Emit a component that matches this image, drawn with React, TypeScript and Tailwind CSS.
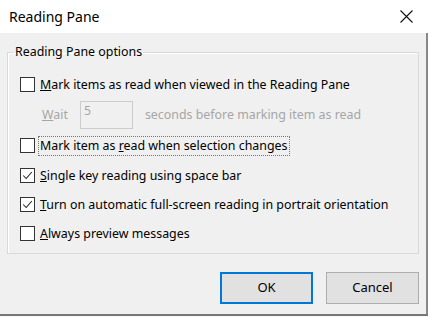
import React from 'react';

const Check = () => (
  <svg viewBox="0 0 15 15" className="absolute inset-0 h-full w-full">
    <path d="M2.5 7.5 L6 11 L12.5 3.5" fill="none" stroke="#222" strokeWidth="1.2" />
  </svg>
);

const Box = ({ checked }: { checked?: boolean }) => (
  <span className="relative block h-[15px] w-[15px] shrink-0 border border-[#333] bg-white">
    {checked && <Check />}
  </span>
);

const Row = ({
  checked,
  focus,
  children,
}: {
  checked?: boolean;
  focus?: boolean;
  children: React.ReactNode;
}) => (
  <div className="flex h-[29px] items-center pl-[12px]">
    <Box checked={checked} />
    <span
      className={
        focus
          ? 'ml-[3px] border border-dotted border-[#777] px-[1px] leading-[18px]'
          : 'ml-[5px] leading-[18px]'
      }
    >
      {children}
    </span>
  </div>
);

const App = () => {
  return (
    <div
      className="h-[317px] w-[428px] overflow-hidden bg-[#f7f7f7] text-[12.4px] text-black"
      style={{ fontFamily: '"Noto Sans", "Open Sans", sans-serif' }}
    >
      <div className="flex h-[316px] w-[428px] flex-col border-b-2 border-[#777] bg-[#f0f0f0]">
        {/* title bar */}
        <div className="flex h-[33px] items-center justify-between bg-white pl-[9px] pr-[15px]">
          <span className="text-[14px]">Reading Pane</span>
          <svg viewBox="0 0 13 13" className="h-[13px] w-[13px]">
            <path d="M0.5 0.5 L12.5 12.5 M12.5 0.5 L0.5 12.5" stroke="#111" strokeWidth="1.1" />
          </svg>
        </div>

        <div className="flex flex-1 flex-col border-r-2 border-[#888]">
          <fieldset className="mx-[7px] mt-[11px] h-[210px] border border-[#d9d9d9] shadow-[inset_1px_1px_0_#fff]">
            <legend className="ml-[6px] px-[1px] leading-[16px]">Reading Pane options</legend>
            <div className="pt-[10px]">
              <Row>
                <u>M</u>ark items as read when viewed in the Reading Pane
              </Row>
              <div className="flex h-[32px] items-center pl-[34px] text-[#a6a6a6]">
                <span>
                  <u>W</u>ait
                </span>
                <span className="ml-[12px] h-[28px] w-[53px] border border-[#cccccc] bg-[#f0f0f0] pl-[3px] leading-[18px]">
                  5
                </span>
                <span className="ml-[12px]">seconds before marking item as read</span>
              </div>
              <Row focus>
                Mark item as <u>r</u>ead when selection changes
              </Row>
              <div className="h-px" />
              <Row checked>
                <u>S</u>ingle key reading using space bar
              </Row>
              <Row checked>
                <u>T</u>urn on automatic full-screen reading in portrait orientation
              </Row>
              <Row>
                <u>A</u>lways preview messages
              </Row>
            </div>
          </fieldset>

          <div className="mt-[18px] flex justify-end gap-[13px] pr-[7px]">
            <button className="h-[32px] w-[93px] border-2 border-[#0078d7] bg-[#e1e1e1] text-[13px]">OK</button>
            <button className="h-[32px] w-[93px] border border-[#adadad] bg-[#e1e1e1] text-[13px]">Cancel</button>
          </div>
        </div>
      </div>
    </div>
  );
};

export default App;
